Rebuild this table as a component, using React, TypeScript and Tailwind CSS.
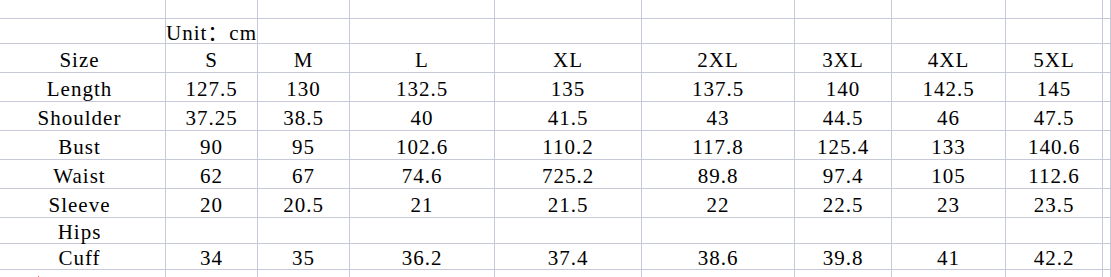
import React from "react";

const rows: string[][] = [
  ["", "", "", "", "", "", "", "", "", ""],
  ["", "Unit：cm", "", "", "", "", "", "", "", ""],
  ["Size", "S", "M", "L", "XL", "2XL", "3XL", "4XL", "5XL", ""],
  ["Length", "127.5", "130", "132.5", "135", "137.5", "140", "142.5", "145", ""],
  ["Shoulder", "37.25", "38.5", "40", "41.5", "43", "44.5", "46", "47.5", ""],
  ["Bust", "90", "95", "102.6", "110.2", "117.8", "125.4", "133", "140.6", ""],
  ["Waist", "62", "67", "74.6", "725.2", "89.8", "97.4", "105", "112.6", ""],
  ["Sleeve", "20", "20.5", "21", "21.5", "22", "22.5", "23", "23.5", ""],
  ["Hips", "", "", "", "", "", "", "", "", ""],
  ["Cuff", "34", "35", "36.2", "37.4", "38.6", "39.8", "41", "42.2", ""],
  ["", "", "", "", "", "", "", "", "", ""],
];

export default function App() {
  return (
    <div className="w-[1111px] h-[277px] overflow-hidden bg-white text-black">
      <div
        className="grid grid-cols-[166px_92px_92px_145px_147px_153px_97px_114px_97px_1fr] grid-rows-[19px_25px_29px_29px_29px_29px_29px_29px_26px_26px_12px] text-[21px] leading-none tracking-[1px]"
        style={{ fontFamily: '"Liberation Serif", "Noto Sans CJK SC", serif' }}
      >
        {rows.map((row, r) =>
          row.map((cell, c) =>
            r === 10 && c === 0 ? (
              // little red comment mark in the cut-off last row
              <div key={`${r}-${c}`} className="flex items-start border-r border-b border-[#c6cad8] pt-[4px]">
                <span className="ml-[38px] mt-[2px] block h-[1px] w-[1px] bg-[#e06060]" />
              </div>
            ) : (
              <div
                key={`${r}-${c}`}
                className={`flex items-center justify-center whitespace-nowrap border-r border-b border-[#c6cad8] pt-[4px] ${
                  c === 0 ? "pr-[6px]" : ""
                }`}
              >
                {cell}
              </div>
            )
          )
        )}
      </div>
    </div>
  );
}
